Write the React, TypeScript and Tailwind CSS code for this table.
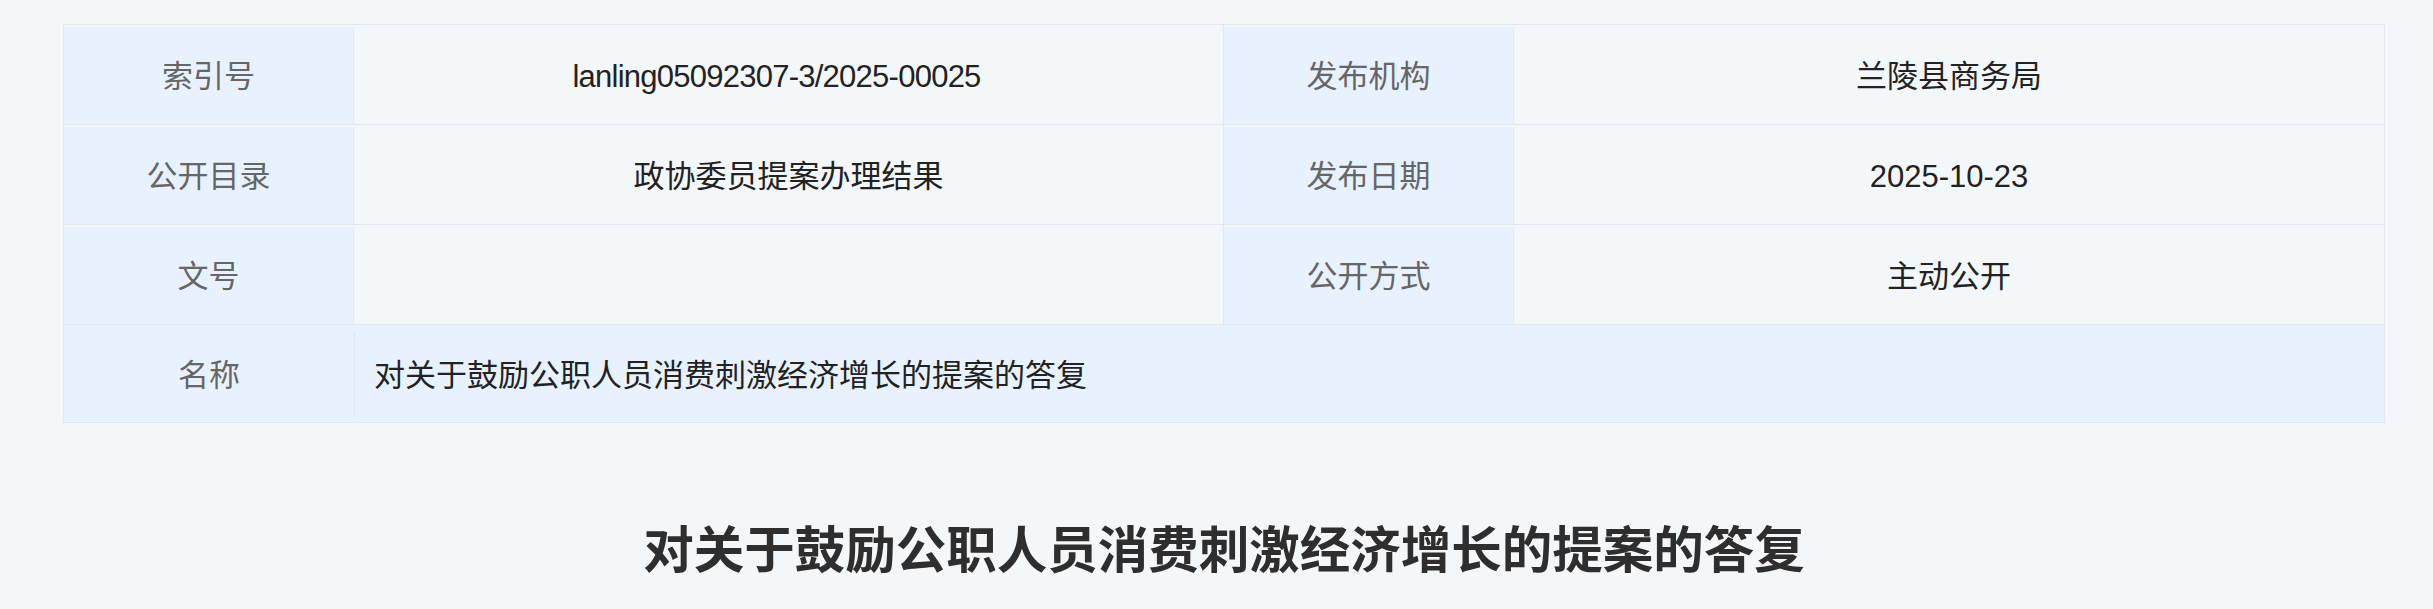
import React from 'react';

const rows = [
    { k1: '索引号', v1: 'lanling05092307-3/2025-00025', k2: '发布机构', v2: '兰陵县商务局', tight: true },
    { k1: '公开目录', v1: '政协委员提案办理结果', k2: '发布日期', v2: '2025-10-23', tight: false },
    { k1: '文号', v1: '', k2: '公开方式', v2: '主动公开', tight: false },
];

const title = '对关于鼓励公职人员消费刺激经济增长的提案的答复';

function Label({ children }: { children: React.ReactNode }) {
    return (
        <div className="mt-[2px] flex w-[290px] shrink-0 items-center justify-center border-r border-[#e1e8f1] bg-[#e8f2fe] pt-[3px] text-[#666666]">
            {children}
        </div>
    );
}

export default function App() {
    return (
        <div
            className="min-h-screen bg-[#f4f7fa] text-[31px]"
            style={{ fontFamily: '"Liberation Sans", "Noto Sans CJK SC", sans-serif' }}
        >
            <div className="ml-[63px] w-[2322px] pt-[24px]">
                {/* Info table */}
                <div className="border border-[#e3e6ea]">
                    {rows.map((r) => (
                        <div key={r.k1} className="flex h-[100px] border-b border-[#e3e6ea]">
                            <Label>{r.k1}</Label>
                            <div
                                className={
                                    r.tight
                                        ? 'flex w-[870px] shrink-0 items-center justify-center border-r border-[#e3e6ea] pt-[5px] pr-[24px] tracking-[-0.75px] text-[#222222]'
                                        : 'flex w-[870px] shrink-0 items-center justify-center border-r border-[#e3e6ea] pt-[5px] text-[#222222]'
                                }
                            >
                                {r.v1}
                            </div>
                            <Label>{r.k2}</Label>
                            <div className="flex flex-1 items-center justify-center pt-[5px] text-[#222222]">{r.v2}</div>
                        </div>
                    ))}
                    <div className="flex h-[97px] bg-[#e8f2fe] pt-[2px]">
                        <div className="flex w-[290px] shrink-0 items-center justify-center pt-[3px] text-[#666666]">名称</div>
                        <div className="my-[5px] w-px bg-[#dfe6ef]" />
                        <div className="flex flex-1 items-center pl-[19px] pt-[3px] text-[#222222]">{title}</div>
                    </div>
                </div>

                <h1 className="mt-[98px] text-center text-[50.5px] font-bold leading-[60px] text-[#2e2e2e]">{title}</h1>
            </div>
        </div>
    );
}
